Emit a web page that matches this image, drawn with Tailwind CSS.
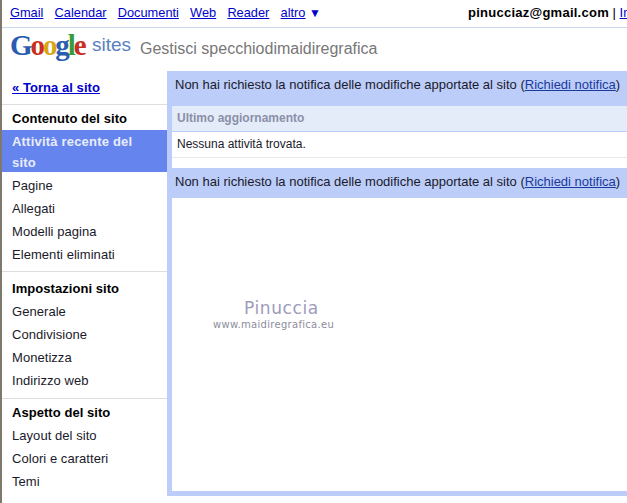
<!DOCTYPE html>
<html lang="it">
<head>
  <meta charset="UTF-8" />
  <title>Google sites</title>
  <script src="https://cdn.jsdelivr.net/npm/@tailwindcss/browser@4"></script>
</head>
<body class="bg-white w-[627px] h-[503px] overflow-hidden font-['Liberation_Sans',Arial,sans-serif] text-[13px] text-[#1a1a2a]">
  <div class="relative h-[503px] border-l-2 border-[#7f786c]">

    <!-- Top bar -->
    <div class="h-[28px] border-b border-[#c9d7f1] flex items-center pl-[8px] pb-[2px] whitespace-nowrap">
      <nav class="flex gap-[11.2px] text-[12.8px] text-[#0000cc]">
        <a class="underline">Gmail</a>
        <a class="underline">Calendar</a>
        <a class="underline">Documenti</a>
        <a class="underline">Web</a>
        <a class="underline">Reader</a>
        <span><a class="underline">altro</a> <span class="text-[12px]">▼</span></span>
      </nav>
      <div class="ml-auto flex-none w-[159px] overflow-hidden text-black">
        <b class="tracking-[0.25px]">pinucciaz@gmail.com</b> | <a class="underline text-[#0000cc]">Impostazioni</a>
      </div>
    </div>

    <!-- Logo row -->
    <div class="h-[43px] flex items-start pl-[8px] whitespace-nowrap">
      <div class="font-['Liberation_Serif',serif] text-[29px] leading-[34px] tracking-[-2.1px] font-bold">
        <span class="text-[#2a5db0]">G</span><span class="text-[#c8301f]">o</span><span class="text-[#d9a514]">o</span><span class="text-[#2a5db0]">g</span><span class="text-[#3a9a3a]">l</span><span class="text-[#c8301f]">e</span>
      </div>
      <span class="text-[#5a7fc0] text-[19px] leading-[24px] ml-[7.5px] mt-[5px]">sites</span>
      <span class="text-[#777] text-[16px] leading-[22px] ml-[9px] mt-[10px]">Gestisci specchiodimaidiregrafica</span>
    </div>

    <div class="flex">
      <!-- Sidebar -->
      <aside class="w-[165px] flex-none tracking-[0.05px]">
        <div class="h-[34px] pl-[10px] pt-[9px] leading-[15px] border-b border-[#ddd]">
          <a class="underline font-bold text-[#0000cc]">« Torna al sito</a>
        </div>
        <h3 class="font-bold text-black pl-[10px] h-[25px] leading-[28px]">Contenuto del sito</h3>
        <div class="bg-[#6584ed] text-[#e8edfb] font-bold pl-[10px] pt-[1px] leading-[21px] h-[42px] pr-[20px] tracking-[0.2px]">Attività recente del sito</div>
        <ul class="leading-[23px] pl-[10px] pt-[2px] pb-[5px]">
          <li>Pagine</li>
          <li>Allegati</li>
          <li>Modelli pagina</li>
          <li>Elementi eliminati</li>
        </ul>
        <div class="border-t border-[#ddd] pt-[5px]">
          <h3 class="font-bold text-black pl-[10px] leading-[23px]">Impostazioni sito</h3>
          <ul class="leading-[23px] pl-[10px] pb-[6px]">
            <li>Generale</li>
            <li>Condivisione</li>
            <li>Monetizza</li>
            <li>Indirizzo web</li>
          </ul>
        </div>
        <div class="border-t border-[#ddd] pt-[2px]">
          <h3 class="font-bold text-black pl-[10px] leading-[23px]">Aspetto del sito</h3>
          <ul class="leading-[23px] pl-[10px]">
            <li>Layout del sito</li>
            <li>Colori e caratteri</li>
            <li>Temi</li>
          </ul>
        </div>
      </aside>

      <!-- Main panel -->
      <main class="flex-1 h-[425px] bg-[#bccdf9] pl-[5px] pb-[5px] flex flex-col whitespace-nowrap">
        <div class="h-[35px] flex-none pl-[3px] pt-[6px] leading-[16px]">
          Non hai richiesto la notifica delle modifiche apportate al sito (<a class="underline text-[#1a3a9c]">Richiedi notifica</a>)
        </div>
        <div class="flex-1 bg-white flex flex-col">
          <div class="h-[26px] flex-none bg-[#e5ecf9] border-b border-[#bccdf9] font-bold text-[12px] text-[#8a90a8] pl-[5px] leading-[25px]">Ultimo aggiornamento</div>
          <div class="h-[26px] flex-none border-b border-[#e8e8e8] pl-[5px] leading-[25px] text-[12px]">Nessuna attività trovata.</div>
          <div class="h-[10px] flex-none"></div>
          <div class="h-[30px] flex-none bg-[#bccdf9] -ml-[5px] pl-[8px] leading-[28px]">
            Non hai richiesto la notifica delle modifiche apportate al sito (<a class="underline text-[#1a3a9c]">Richiedi notifica</a>)
          </div>
        </div>
      </main>
    </div>

    <!-- Watermark -->
    <div class="absolute left-[211px] top-[298px] w-[121px] font-['DejaVu_Sans',sans-serif] text-[#9c9cbc] pointer-events-none whitespace-nowrap">
      <div class="text-[17px] leading-[20px] tracking-[0.6px] pl-[31px]">Pinuccia</div>
      <div class="text-[10px] leading-[14px] tracking-[0.3px] text-[#8d8d9d]">www.maidiregrafica.eu</div>
    </div>
  </div>
</body>
</html>
